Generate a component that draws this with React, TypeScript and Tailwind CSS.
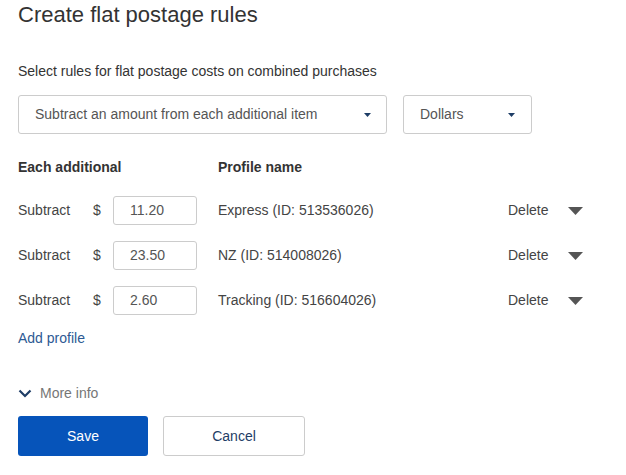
export default function App() {
  const rows = [
    { amount: '11.20', name: 'Express (ID: 513536026)' },
    { amount: '23.50', name: 'NZ (ID: 514008026)' },
    { amount: '2.60', name: 'Tracking (ID: 516604026)' },
  ];

  return (
    <div className="w-[626px] h-[475px] overflow-hidden bg-white px-[18px] pt-[2px] text-[#333] font-['Liberation_Sans',Arial,sans-serif]">
      {/* Title */}
      <h1 className="text-[22px] leading-[26px] text-[#333]">Create flat postage rules</h1>

      <p className="mt-[35px] text-[14px] leading-[16px] text-[#333]">
        Select rules for flat postage costs on combined purchases
      </p>

      {/* Selects */}
      <div className="mt-[16px] flex gap-[16px]">
        <div className="flex h-[39px] w-[369px] items-center justify-between rounded-[3px] border border-[#ccc] pl-[16px] pr-[15px] text-[14px] text-[#555]">
          <span>Subtract an amount from each additional item</span>
          <svg width="7" height="4" viewBox="0 0 7 4">
            <path d="M0 0h7L3.5 4z" fill="#1e3d66" />
          </svg>
        </div>
        <div className="flex h-[39px] w-[129px] items-center justify-between rounded-[3px] border border-[#ccc] pl-[16px] pr-[16px] text-[14px] text-[#555]">
          <span>Dollars</span>
          <svg width="7" height="4" viewBox="0 0 7 4">
            <path d="M0 0h7L3.5 4z" fill="#1e3d66" />
          </svg>
        </div>
      </div>

      {/* Header */}
      <div className="mt-[25px] flex text-[14px] font-bold leading-[16px] text-[#333]">
        <span className="w-[200px]">Each additional</span>
        <span>Profile name</span>
      </div>

      {/* Rows */}
      <div className="mt-[21px] flex flex-col gap-[16px]">
        {rows.map((r) => (
          <div key={r.name} className="flex h-[29px] items-center text-[14px] text-[#444]">
            <span className="w-[75px]">Subtract</span>
            <span className="w-[20px]">$</span>
            <div className="flex h-[29px] w-[84px] items-center rounded-[3px] border border-[#ccc] pl-[16px] text-[#555]">
              {r.amount}
            </div>
            <span className="ml-[21px] w-[290px]">{r.name}</span>
            <span className="w-[60px]">Delete</span>
            <svg width="15" height="8" viewBox="0 0 15 8">
              <path d="M0 0h15L7.5 8z" fill="#555" />
            </svg>
          </div>
        ))}
      </div>

      <div className="mt-[15px] text-[14px] leading-[16px] text-[#2d5a94]">Add profile</div>

      {/* More info */}
      <div className="mt-[37px] flex items-center gap-[8px] text-[14px] text-[#767676]">
        <svg width="14" height="9" viewBox="0 0 14 9">
          <path d="M1.5 1.5l5.5 5.5 5.5-5.5" stroke="#1e3d66" strokeWidth="2.2" fill="none" />
        </svg>
        <span>More info</span>
      </div>

      {/* Buttons */}
      <div className="mt-[12px] flex gap-[15px]">
        <button className="h-[40px] w-[130px] rounded-[3px] bg-[#0654ba] text-[14px] text-white">Save</button>
        <button className="h-[40px] w-[142px] rounded-[3px] border border-[#ccc] bg-white text-[14px] text-[#1e3d66]">
          Cancel
        </button>
      </div>
    </div>
  );
}
